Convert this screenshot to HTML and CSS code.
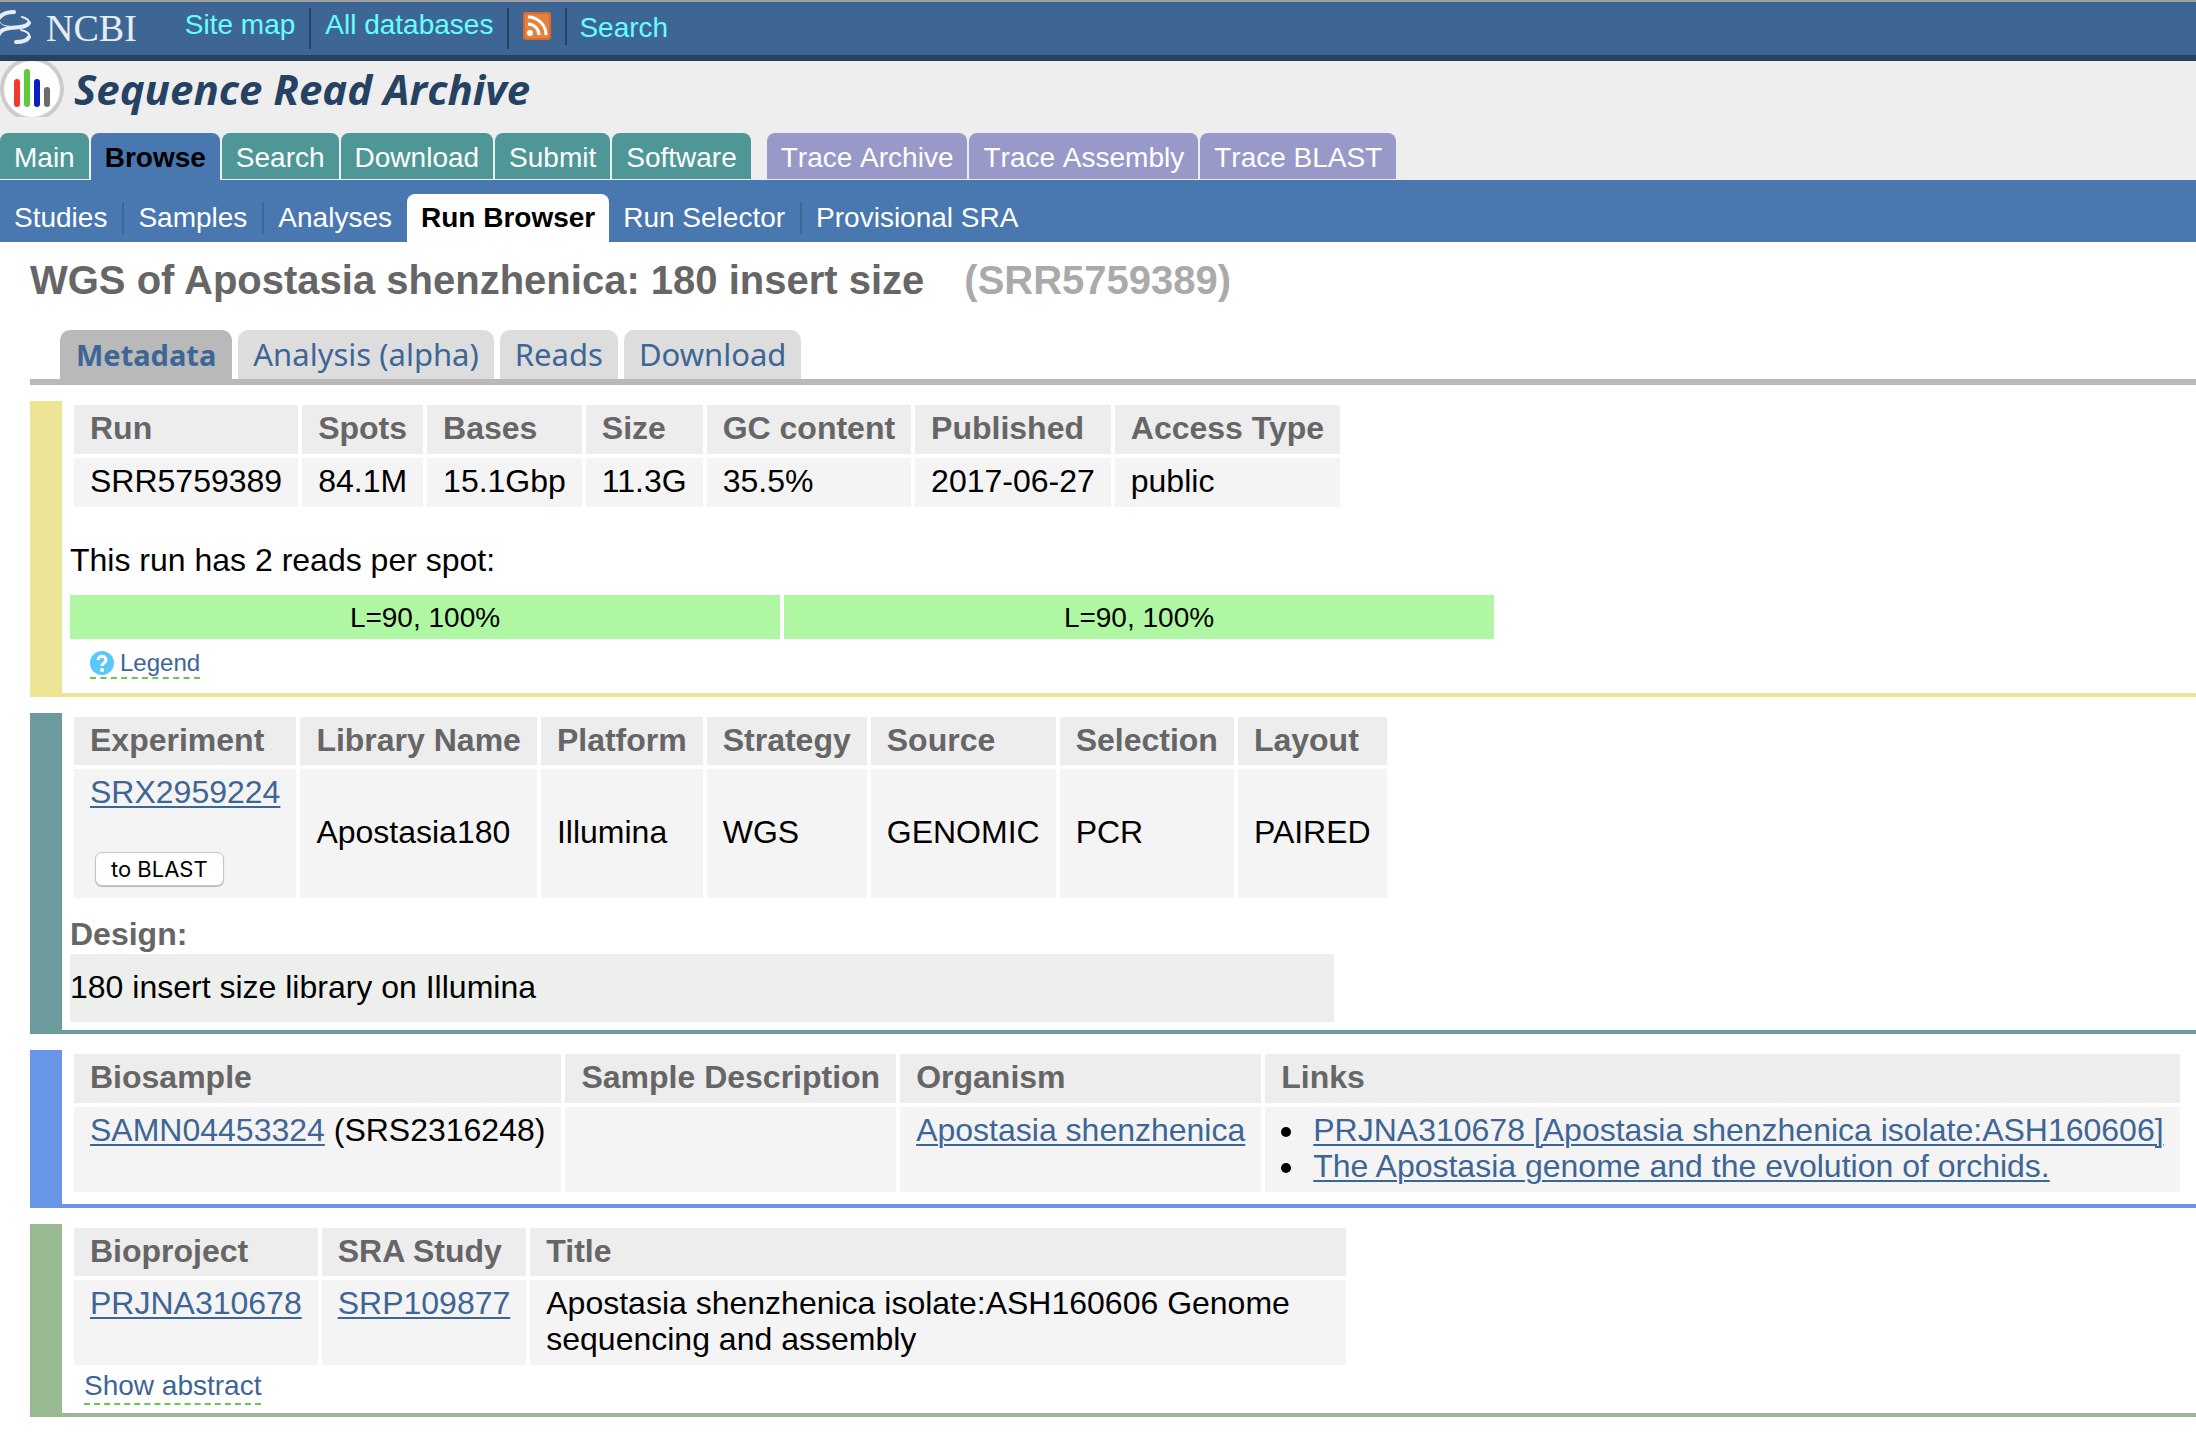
FILE: index.html
```html
<!DOCTYPE html>
<html lang="en">
<head>
<meta charset="utf-8">
<title>SRR5759389 : Run Browser : Sequence Read Archive</title>
<link rel="stylesheet" href="styles.css">
</head>
<body>
<header>
  <div class="topbar">
    <a class="ncbi" href="#">
      <svg width="32" height="36" viewBox="0 0 32 36" aria-hidden="true">
        <g fill="none" stroke="#e6edf5" stroke-linecap="round">
          <path d="M14 2C7 2 2 4 -1 8" stroke-width="4"/>
          <path d="M0 12C1 15 5 16 9 16" stroke-width="1"/>
          <path d="M22 7C27 8 30 11 29 14" stroke-width="2"/>
          <path d="M29 13C26 18 17 17 10 18C4 19 0 21 -1 24" stroke-width="4"/>
          <path d="M21 20C27 21 30 24 29 27" stroke-width="2"/>
          <path d="M29 27C27 31 22 32 16 32" stroke-width="4"/>
        </g>
      </svg>
      <span>NCBI</span>
    </a>
    <ul class="toplinks">
      <li><a href="#">Site map</a></li>
      <li><a href="#">All databases</a></li>
      <li><a class="rss" href="#" aria-label="RSS feed">
        <svg width="28" height="28" viewBox="0 0 28 28" aria-hidden="true">
          <rect width="28" height="28" rx="3" fill="#dc6a2e"/>
          <rect x="2" y="2" width="24" height="24" rx="3" fill="#e5823f"/>
          <circle cx="7" cy="21" r="3" fill="#fff"/>
          <path d="M5 12a11 11 0 0 1 11 11M5 5a18 18 0 0 1 18 18" fill="none" stroke="#fff" stroke-width="3"/>
        </svg></a></li>
      <li class="search"><a href="#">Search</a></li>
    </ul>
  </div>
  <div class="masthead">
    <a class="brand" href="#">
      <svg width="66" height="56" viewBox="0 0 66 56" aria-hidden="true">
        <circle cx="32" cy="28" r="30" fill="#fff" stroke="#ccc" stroke-width="4"/>
        <g stroke-width="6" stroke-linecap="round">
          <path d="M17 21V43" stroke="#f03a2c"/>
          <path d="M27 11V43" stroke="#5fcb3c"/>
          <path d="M37 21V43" stroke="#0a1fc4"/>
          <path d="M47 29V43" stroke="#6b6b6b"/>
        </g>
      </svg>
      <span>Sequence Read Archive</span>
    </a>
    <nav class="maintabs">
      <a href="#">Main</a>
      <a class="active" href="#">Browse</a>
      <a href="#">Search</a>
      <a href="#">Download</a>
      <a href="#">Submit</a>
      <a href="#">Software</a>
      <a class="trace first" href="#">Trace Archive</a>
      <a class="trace" href="#">Trace Assembly</a>
      <a class="trace" href="#">Trace BLAST</a>
    </nav>
  </div>
  <nav class="subtabs">
    <a href="#">Studies</a>
    <a class="split" href="#">Samples</a>
    <a class="split" href="#">Analyses</a>
    <a class="active" href="#">Run Browser</a>
    <a href="#">Run Selector</a>
    <a class="split" href="#">Provisional SRA</a>
  </nav>
</header>

<main>
  <h1><span>WGS of Apostasia shenzhenica: 180 insert size</span> <span class="accession">(SRR5759389)</span></h1>
  <nav class="viewtabs">
    <a class="active" href="#">Metadata</a>
    <a href="#">Analysis (alpha)</a>
    <a href="#">Reads</a>
    <a href="#">Download</a>
  </nav>

  <section class="block run">
    <table>
      <thead><tr><th>Run</th><th>Spots</th><th>Bases</th><th>Size</th><th>GC content</th><th>Published</th><th>Access Type</th></tr></thead>
      <tbody><tr><td>SRR5759389</td><td>84.1M</td><td>15.1Gbp</td><td>11.3G</td><td>35.5%</td><td>2017-06-27</td><td>public</td></tr></tbody>
    </table>
    <p class="spots">This run has 2 reads per spot:</p>
    <div class="reads"><div>L=90, 100%</div><div>L=90, 100%</div></div>
    <a class="toggle legend" href="#">
      <svg width="24" height="24" viewBox="0 0 24 24" aria-hidden="true">
        <circle cx="12" cy="12" r="12" fill="#5ac8fa"/>
        <path d="M8 9C8 4 16 4 16 9C16 12 12 12 12 15" fill="none" stroke="#fff" stroke-width="3"/>
        <circle cx="12" cy="19" r="2" fill="#fff"/>
      </svg>
      <span>Legend</span>
    </a>
  </section>

  <section class="block experiment">
    <table>
      <thead><tr><th>Experiment</th><th>Library Name</th><th>Platform</th><th>Strategy</th><th>Source</th><th>Selection</th><th>Layout</th></tr></thead>
      <tbody><tr><td><a href="#">SRX2959224</a><button type="button">to BLAST</button></td><td>Apostasia180</td><td>Illumina</td><td>WGS</td><td>GENOMIC</td><td>PCR</td><td>PAIRED</td></tr></tbody>
    </table>
    <h2>Design:</h2>
    <div class="design">180 insert size library on Illumina</div>
  </section>

  <section class="block sample">
    <table>
      <thead><tr><th>Biosample</th><th>Sample Description</th><th>Organism</th><th>Links</th></tr></thead>
      <tbody><tr><td><a href="#">SAMN04453324</a> (SRS2316248)</td><td></td><td><a href="#">Apostasia shenzhenica</a></td>
      <td><ul><li><a href="#">PRJNA310678 [Apostasia shenzhenica isolate:ASH160606]</a></li><li><a href="#">The Apostasia genome and the evolution of orchids.</a></li></ul></td></tr></tbody>
    </table>
  </section>

  <section class="block project">
    <table>
      <thead><tr><th>Bioproject</th><th>SRA Study</th><th class="title">Title</th></tr></thead>
      <tbody><tr><td><a href="#">PRJNA310678</a></td><td><a href="#">SRP109877</a></td><td class="title">Apostasia shenzhenica isolate:ASH160606 Genome sequencing and assembly</td></tr></tbody>
    </table>
    <a class="toggle abstract" href="#">Show abstract</a>
  </section>
</main>
</body>
</html>
```
FILE: styles.css
```css
* { box-sizing: border-box; }

body {
  margin: 0;
  background: #fff;
  color: #000;
  font: 32px/36px "Liberation Sans", Arial, Helvetica, sans-serif;
}

a { color: #3d6696; text-decoration-thickness: 2px; text-underline-offset: 3px; }
ul { margin: 0; padding: 0; }
svg { display: block; flex: none; }

/* Top bar */
.topbar {
  display: flex;
  height: 61px;
  background: #3e6694;
  border-top: 2px solid #a0a0a4;
  border-bottom: 6px solid #264263;
}
.ncbi {
  display: flex;
  gap: 14px;
  padding-top: 8px;
  color: #e6edf5;
  font: 38px/36px "Liberation Serif", "Times New Roman", serif;
  text-decoration: none;
}
.toplinks {
  display: flex;
  align-items: flex-start;
  margin-left: 34px;
  padding-top: 6px;
  list-style: none;
  font-size: 28px;
  line-height: 34px;
}
.toplinks li { height: 41px; padding: 0 14px; }
.toplinks li + li { border-left: 2px solid #264263; }
.toplinks a { color: #6ff; text-decoration: none; }
.toplinks .rss svg { margin-top: 4px; }
.toplinks .search { height: 37px; padding: 3px 12px 0; }

/* Masthead and main tabs */
.masthead { background: #eee; }
.brand {
  display: flex;
  gap: 8px;
  height: 72px;
  color: #264263;
  font: italic bold 42px/56px "Open Sans", "Segoe UI", sans-serif;
  text-decoration: none;
}
.maintabs {
  display: flex;
  gap: 2px;
  align-items: flex-start;
  height: 47px;
  font-size: 28px;
  line-height: 42px;
  font-kerning: none;
}
.maintabs a {
  height: 46px;
  padding: 4px 14px 0;
  border-radius: 8px 8px 0 0;
  background: #4f9797;
  color: #fff;
  text-decoration: none;
}
.maintabs .active { height: 47px; background: #4977b0; color: #000; font-weight: bold; }
.maintabs .trace { background: #9899c8; }
.maintabs .first { margin-left: 14px; }

.subtabs {
  display: flex;
  align-items: center;
  padding-top: 14px;
  background: #4977b0;
  font-size: 28px;
  line-height: 32px;
  font-kerning: none;
}
.subtabs a { padding: 0 14px; color: #fff; text-decoration: none; }
.subtabs .split { margin-left: 1px; border-left: 2px solid #3e6694; }
.subtabs .active {
  margin-left: 1px;
  padding: 8px 14px;
  border-radius: 8px 8px 0 0;
  background: #fff;
  color: #000;
  font-weight: bold;
}

/* Page content */
main { padding: 15px 0 20px 30px; }
h1 {
  display: flex;
  gap: 40px;
  margin: 0 0 27px;
  color: #666;
  font-size: 40px;
  line-height: 46px;
}
.accession { color: #aaa; }

.viewtabs {
  display: flex;
  gap: 6px;
  padding-left: 30px;
  border-bottom: 6px solid #b9b9b9;
  font: 31px/49px "Noto Sans", "Lucida Grande", sans-serif;
}
.viewtabs a {
  padding: 0 15px;
  border-radius: 10px 10px 0 0;
  background: #ddd;
  text-decoration: none;
}
.viewtabs .active { padding: 0 16px; background: #b9b9b9; font-size: 29px; font-weight: bold; }

.block {
  margin-top: 16px;
  padding-left: 8px;
  border-left: 32px solid;
  border-bottom: 4px solid;
}
.run { padding-bottom: 14px; border-color: #ede496; }
.experiment { padding-bottom: 8px; border-color: #6b9b9d; }
.sample { padding-bottom: 8px; border-color: #6995e6; }
.project { padding-bottom: 8px; border-color: #98b991; }

table { border-spacing: 4px; }
th, td { padding: 5px 16px 8px; text-align: left; white-space: nowrap; }
th { background: #ededed; color: #666; }
td { background: #f4f4f4; vertical-align: top; }
.experiment td { vertical-align: middle; }
.experiment th, .project th { padding-bottom: 7px; }
.title { width: 816px; white-space: normal; }
td ul { padding-left: 26px; }
td li { padding-left: 6px; }

.spots { margin: 31px 0 17px; }
.reads {
  display: flex;
  gap: 4px;
  max-width: 1424px;
  font-size: 28px;
  line-height: 42px;
  text-align: center;
}
.reads div { flex: 1; padding-top: 2px; background: #aff7a2; }

.toggle { border-bottom: 2px dashed #66c94b; text-decoration: none; }
.legend {
  display: flex;
  gap: 6px;
  width: max-content;
  margin: 12px 0 0 20px;
  padding-bottom: 2px;
  font-size: 24px;
  line-height: 24px;
}
.abstract {
  display: block;
  width: max-content;
  margin-left: 14px;
  font-size: 28px;
  line-height: 34px;
}

td button {
  display: block;
  margin: 42px 0 4px 5px;
  padding: 0 15px;
  border: 1px solid #c4c4c4;
  border-radius: 7px;
  background: #fff;
  box-shadow: 0 1px 1px #bbb;
  color: #000;
  font: 22px/32px Inter, sans-serif;
}
h2 { margin: 14px 0 2px; color: #666; font-size: 32px; line-height: 36px; }
.design { max-width: 1264px; padding: 15px 0 17px; background: #edefec; }
```
